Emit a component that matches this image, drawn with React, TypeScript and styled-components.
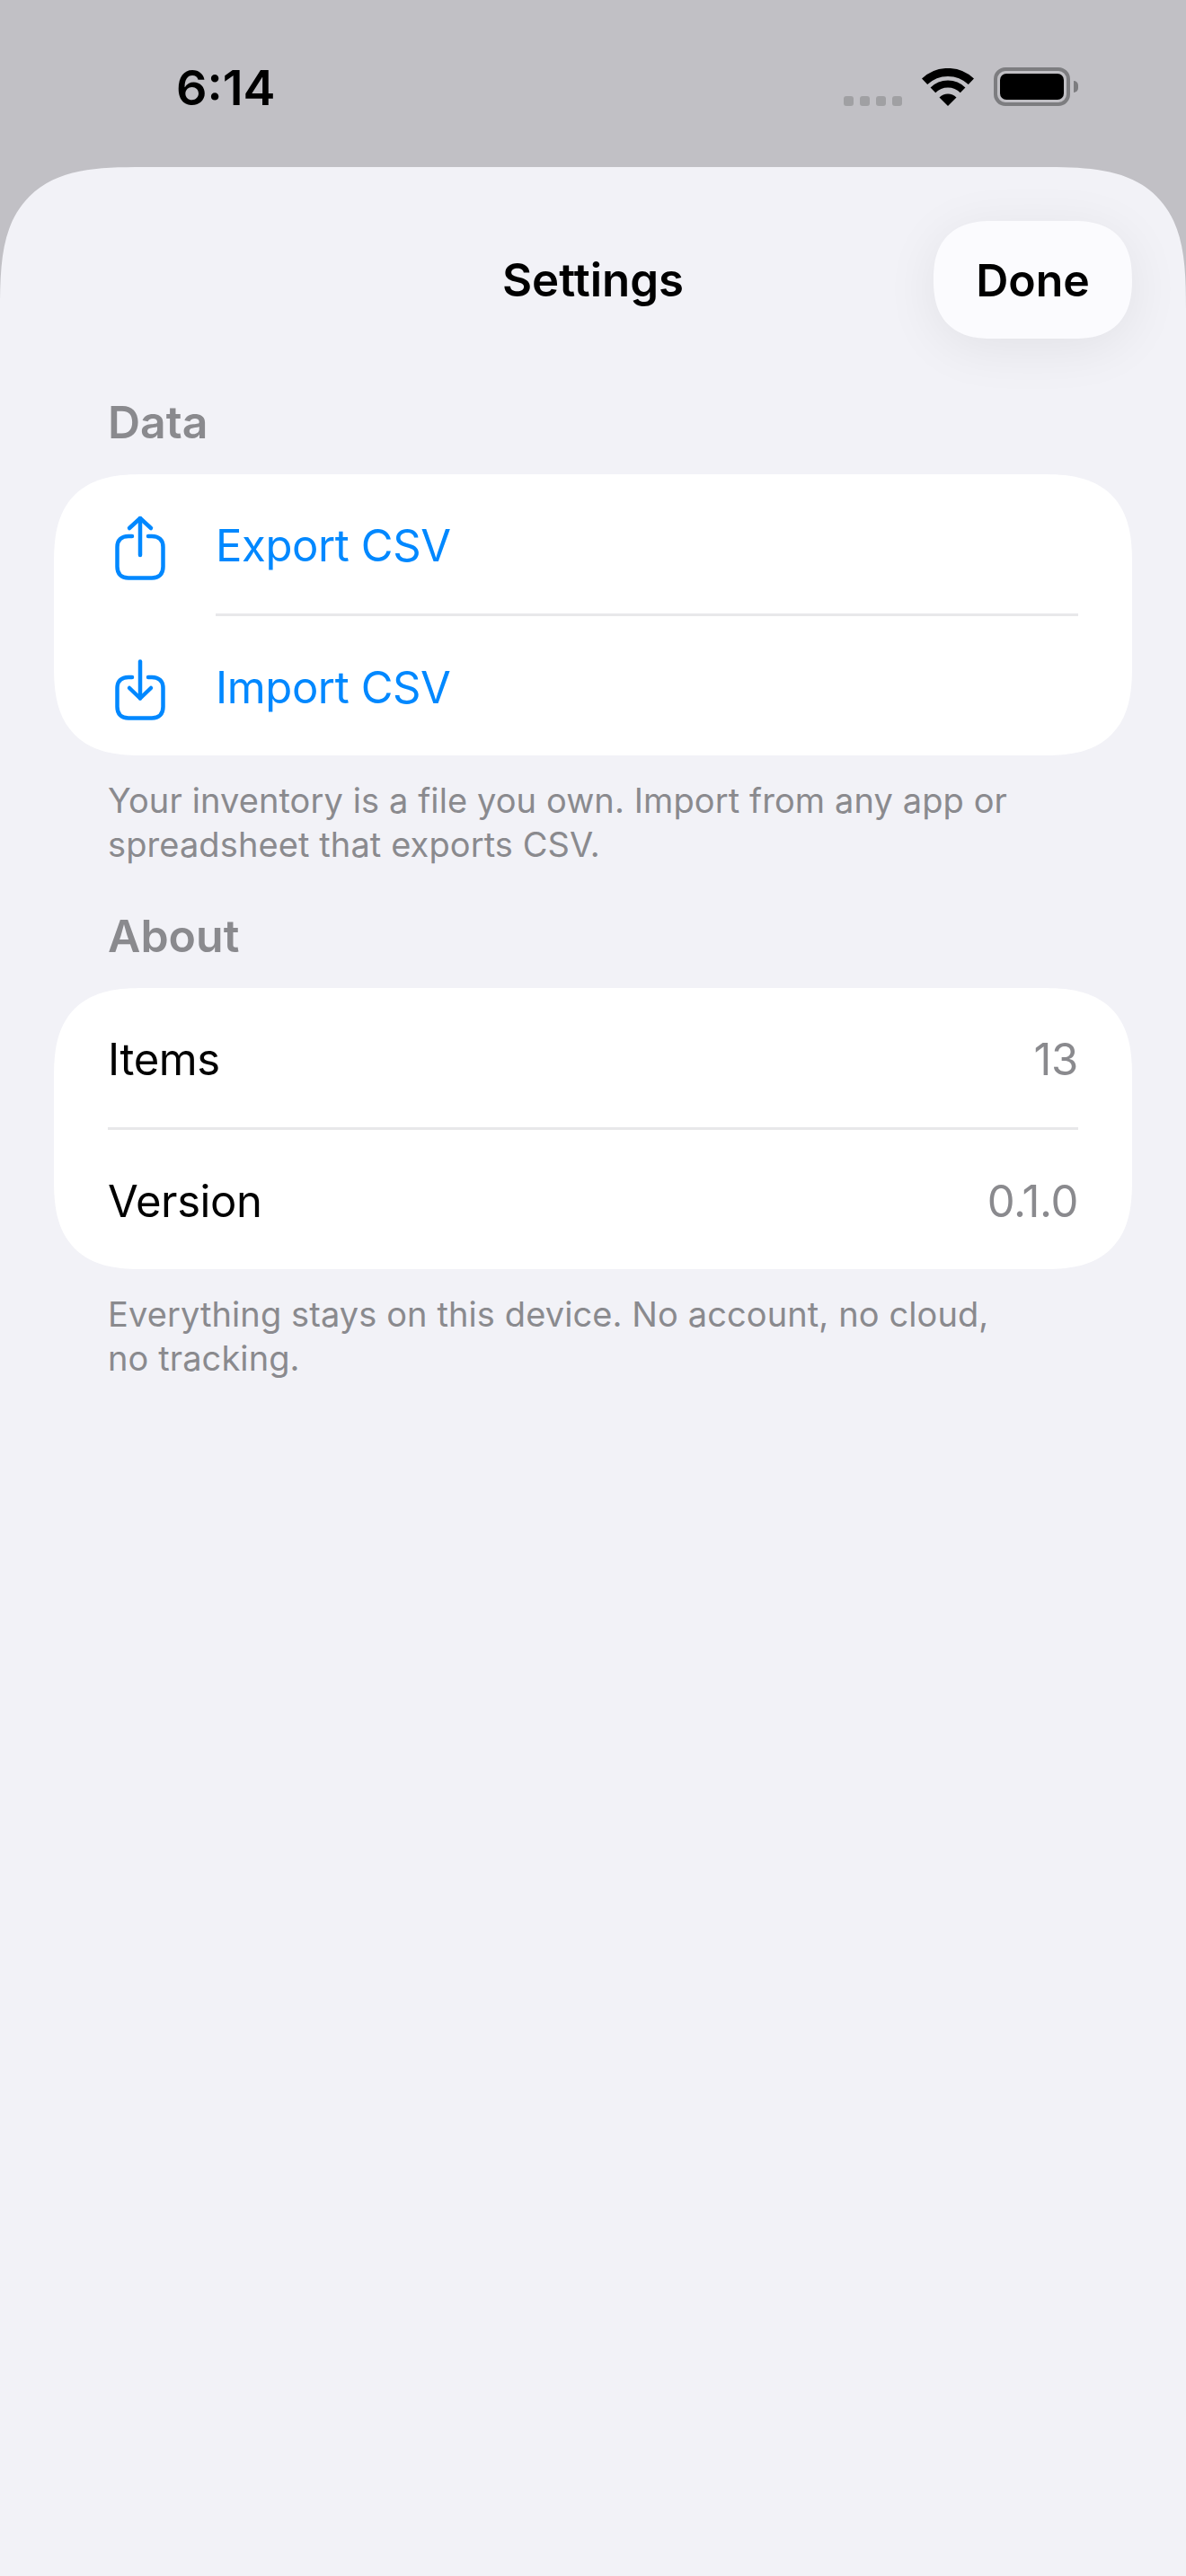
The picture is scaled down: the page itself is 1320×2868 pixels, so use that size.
import styled, { createGlobalStyle } from 'styled-components';

const GlobalStyle = createGlobalStyle`
  html, body {
    margin: 0;
    padding: 0;
    background: #c1c0c5;
  }
  body {
    font-family: Inter, "Noto Sans", sans-serif;
    -webkit-font-smoothing: antialiased;
  }
`;

const Screen = styled.div`
  width: 1320px;
  height: 2868px;
  display: flex;
  flex-direction: column;
  overflow: hidden;
  background: #c1c0c5;
`;

const StatusBar = styled.div`
  height: 186px;
  flex-shrink: 0;
  display: flex;
  justify-content: space-between;
  align-items: flex-start;
  padding: 72px 129px 0 196px;
  box-sizing: border-box;
`;

const Time = styled.div`
  font-size: 54px;
  line-height: 51px;
  font-weight: 600;
  color: #000;
`;

const StatusIcons = styled.div`
  display: flex;
  align-items: flex-end;
  height: 43px;
  margin-top: 3px;
`;

const SignalDots = styled.div`
  display: flex;
  gap: 7px;
  margin-right: 22px;
`;

const Dot = styled.span`
  width: 11px;
  height: 11px;
  border-radius: 3px;
  background: #a0a0a3;
`;

const Battery = styled.div`
  position: relative;
  width: 85px;
  height: 43px;
  margin-left: 22px;
  padding: 3px;
  box-sizing: border-box;
  border: 4px solid #7d7d80;
  border-radius: 13px;
`;

const BatteryFill = styled.div`
  width: 100%;
  height: 100%;
  border-radius: 7px;
  background: #000;
`;

const BatteryCap = styled.span`
  position: absolute;
  right: -13px;
  top: 11px;
  width: 5px;
  height: 13px;
  border-radius: 0 5px 5px 0;
  background: #7d7d80;
`;

const Sheet = styled.div`
  flex: 1;
  background: #f2f2f7;
  border-radius: 160px 160px 0 0;
  corner-shape: superellipse(1.6);
  padding: 60px 60px 0;
`;

const Header = styled.header`
  position: relative;
  height: 131px;
  display: flex;
  align-items: center;
  justify-content: center;
  margin-bottom: 63px;
`;

const Title = styled.h1`
  margin: 0;
  font-size: 51px;
  font-weight: 600;
  color: #000;
`;

const DoneButton = styled.button`
  position: absolute;
  right: 0;
  top: 0;
  width: 221px;
  height: 131px;
  border: 0;
  border-radius: 66px;
  corner-shape: superellipse(1.3);
  background: #fbfbfe;
  box-shadow: 0 10px 60px rgba(0, 0, 0, 0.07);
  font-family: inherit;
  font-size: 50px;
  font-weight: 600;
  color: #000;
`;

const SectionLabel = styled.h2`
  margin: 0 0 28px 60px;
  font-size: 50px;
  line-height: 60px;
  font-weight: 600;
  color: #8a8a8e;
`;

const Card = styled.div`
  background: #fff;
  border-radius: 100px;
  corner-shape: superellipse(1.4);
  padding: 0 60px;
`;

const Row = styled.div`
  height: 155px;
  box-sizing: border-box;
  padding-top: 4px;
  display: flex;
  align-items: center;
  justify-content: space-between;
`;

const ActionRow = styled(Row)`
  justify-content: flex-start;
  gap: 56px;
  margin-left: 8px;
`;

const Divider = styled.div<{ $inset?: number }>`
  height: 3px;
  margin-left: ${(p) => p.$inset ?? 0}px;
  background: #e8e8ea;
`;

const ActionLabel = styled.span`
  font-size: 49px;
  letter-spacing: -0.4px;
  color: #0088ff;
`;

const RowLabel = styled.span`
  font-size: 49px;
  letter-spacing: -0.4px;
  color: #000;
`;

const RowValue = styled.span`
  font-size: 49px;
  letter-spacing: -0.4px;
  color: #8a8a8e;
`;

const Footnote = styled.p`
  margin: 26px 60px 47px;
  font-size: 38px;
  line-height: 49px;
  letter-spacing: 0.1px;
  color: #8a8a8e;
`;

const RowIcon = styled.svg`
  width: 56px;
  height: 76px;
  fill: none;
  stroke: #0088ff;
  stroke-width: 4.5;
  stroke-linecap: round;
  stroke-linejoin: round;
`;

function ExportIcon() {
  return (
    <RowIcon viewBox="0 0 56 76">
      <path d="M19 27H15C7 27 2.500 31.500 2.500 39V61C2.500 69 7 73.500 15 73.500H41C49 73.500 53.500 69 53.500 61V39C53.500 31.500 49 27 41 27H37" />
      <path d="M28 48V7" />
      <path d="M16 18L28 7L40 18" />
    </RowIcon>
  );
}

function ImportIcon() {
  return (
    <RowIcon viewBox="0 0 56 76">
      <path d="M19 26H15C7 26 2.500 30.500 2.500 38V59C2.500 67 7 71.500 15 71.500H41C49 71.500 53.500 67 53.500 59V38C53.500 30.500 49 26 41 26H37" />
      <path d="M28 8.500V49.500" />
      <path d="M16 38L28 49.500L40 38" />
    </RowIcon>
  );
}

function WifiIcon() {
  return (
    <svg width="58" height="42" viewBox="0 0 58 42" fill="none">
      <path d="M3.100 14.800A37.500 37.500 0 0 1 54.900 14.800" stroke="#000" strokeWidth="9" />
      <path d="M12.400 24.300A23.500 23.500 0 0 1 45.600 24.300" stroke="#000" strokeWidth="8" />
      <path d="M19.500 32.500A13.500 13.500 0 0 1 38.500 32.500L29 42Z" fill="#000" />
    </svg>
  );
}

export default function App() {
  return (
    <Screen>
      <GlobalStyle />
      <StatusBar>
        <Time>6:14</Time>
        <StatusIcons>
          <SignalDots>
            <Dot />
            <Dot />
            <Dot />
            <Dot />
          </SignalDots>
          <WifiIcon />
          <Battery>
            <BatteryFill />
            <BatteryCap />
          </Battery>
        </StatusIcons>
      </StatusBar>
      <Sheet>
        <Header>
          <Title>Settings</Title>
          <DoneButton type="button">Done</DoneButton>
        </Header>
        <SectionLabel>Data</SectionLabel>
        <Card>
          <ActionRow>
            <ExportIcon />
            <ActionLabel>Export CSV</ActionLabel>
          </ActionRow>
          <Divider $inset={120} />
          <ActionRow>
            <ImportIcon />
            <ActionLabel>Import CSV</ActionLabel>
          </ActionRow>
        </Card>
        <Footnote>
          Your inventory is a file you own. Import from any app or
          <br />
          spreadsheet that exports CSV.
        </Footnote>
        <SectionLabel>About</SectionLabel>
        <Card>
          <Row>
            <RowLabel>Items</RowLabel>
            <RowValue>13</RowValue>
          </Row>
          <Divider />
          <Row>
            <RowLabel>Version</RowLabel>
            <RowValue>0.1.0</RowValue>
          </Row>
        </Card>
        <Footnote>
          Everything stays on this device. No account, no cloud,
          <br />
          no tracking.
        </Footnote>
      </Sheet>
    </Screen>
  );
}
